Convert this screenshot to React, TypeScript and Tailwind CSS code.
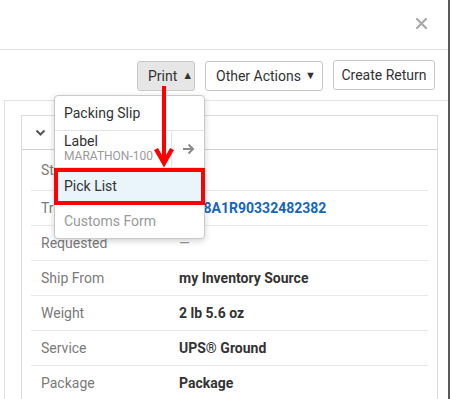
import React from "react";

const rows: { label: string; value: string; blue?: boolean; muted?: boolean; tall?: boolean }[] = [
  { label: "Status", value: "", tall: true },
  { label: "Tracking", value: "1Z48A1R90332482382", blue: true },
  { label: "Requested", value: "—", muted: true },
  { label: "Ship From", value: "my Inventory Source" },
  { label: "Weight", value: "2 lb 5.6 oz" },
  { label: "Service", value: "UPS® Ground" },
  { label: "Package", value: "Package" },
];

export default function App() {
  return (
    <div
      className="relative w-[451px] h-[399px] overflow-hidden bg-white text-[#333]"
      style={{ fontFamily: "Roboto, 'Liberation Sans', sans-serif" }}
    >
      <div className="w-[450px] h-full border-r-2 border-[#5a5a5a] flex flex-col">
        {/* header */}
        <div className="h-[50px] shrink-0 border-b border-[#e3e3e3] flex items-center justify-end pr-[21px]">
          <svg width="11" height="11" viewBox="0 0 11 11" className="mb-[2px]">
            <path d="M1 1 L10 10 M10 1 L1 10" stroke="#a9a9a9" strokeWidth="2.2" strokeLinecap="square" />
          </svg>
        </div>
        {/* toolbar */}
        <div className="h-[50px] shrink-0 flex items-center justify-end pr-[13px] text-[14px]">
          <div className="h-[30px] w-[58px] rounded-[3px] border border-[#c8c8c8] bg-[#e6e6e6] flex items-center pl-[10px] gap-[5px] mt-[2px]">
            <span>Print</span>
            <span className="text-[11px]">▲</span>
          </div>
          <div className="ml-[10px] h-[30px] w-[118px] rounded-[3px] border border-[#c8c8c8] bg-white flex items-center justify-between pl-[10px] pr-[6px] mt-[2px]">
            <span>Other Actions</span>
            <span className="text-[11px]">▼</span>
          </div>
          <div className="ml-[10px] h-[30px] w-[102px] rounded-[3px] border border-[#c8c8c8] bg-white flex items-center justify-center">
            <span>Create Return</span>
          </div>
        </div>
        {/* body */}
        <div className="flex-1 pl-[4px]">
          <div className="h-full border-l border-t border-[#e3e3e3] pt-[14px] pl-[16px] pr-[10px]">
            <div className="border border-[#dcdcdc] h-[300px]">
              <div className="h-[34px] border-b border-[#cfcfcf] flex items-center pl-[13px]">
                <svg width="11" height="8" viewBox="0 0 11 8">
                  <path d="M1.5 1.5 L5.5 5.5 L9.5 1.5" stroke="#555" strokeWidth="2" fill="none" />
                </svg>
              </div>
              <div className="pl-[9px] pr-[9px] text-[14px]">
                {rows.map((r) => (
                  <div
                    key={r.label}
                    className={`flex items-center border-b border-[#e8e8e8] ${r.tall ? "h-[41px]" : "h-[35px]"}`}
                  >
                    <span className="w-[148px] shrink-0 pl-[10px] text-[#7a7a7a]">{r.label}</span>
                    <span
                      className={
                        r.blue
                          ? "font-bold text-[#1565c0]"
                          : r.muted
                          ? "text-[#999]"
                          : "font-bold text-[#333]"
                      }
                    >
                      {r.value}
                    </span>
                  </div>
                ))}
              </div>
            </div>
          </div>
        </div>
      </div>

      {/* dropdown */}
      <div className="absolute left-[54px] top-[95px] w-[151px] h-[144px] rounded-[4px] border border-[#c9c9c9] bg-white shadow-[0_2px_6px_rgba(0,0,0,0.18)] text-[14px] flex flex-col">
        <div className="h-[35px] flex items-center pl-[9px] border-b border-[#e3e3e3]">Packing Slip</div>
        <div className="h-[37px] flex border-b border-[#e3e3e3]">
          <div className="w-[117px] pl-[9px] flex flex-col justify-center border-r border-[#e3e3e3] pb-[1px]">
            <span className="leading-[16px]">Label</span>
            <span className="leading-[15px] text-[12px] text-[#9a9a9a]">MARATHON-100</span>
          </div>
          <div className="flex-1 flex items-center justify-center">
            <svg width="13" height="12" viewBox="0 0 13 12">
              <path d="M1 6 H11 M6.5 1.5 L11 6 L6.5 10.5" stroke="#8a8a8a" strokeWidth="2" fill="none" />
            </svg>
          </div>
        </div>
        <div className="h-[37px] -mx-[1px] flex items-center pl-[6px] bg-[#e9f4fb] border-[4px] border-[#ff0000]">
          Pick List
        </div>
        <div className="flex-1 flex items-center pl-[9px] text-[#999]">Customs Form</div>
      </div>

      {/* red arrow */}
      <svg className="absolute left-[150px] top-[86px]" width="30" height="84" viewBox="0 0 30 84">
        <path d="M14 0 V76" stroke="#ff0000" strokeWidth="4" />
        <path d="M6 63 L14 77 L22 63" stroke="#ff0000" strokeWidth="4.5" fill="none" strokeLinejoin="miter" />
      </svg>
    </div>
  );
}
